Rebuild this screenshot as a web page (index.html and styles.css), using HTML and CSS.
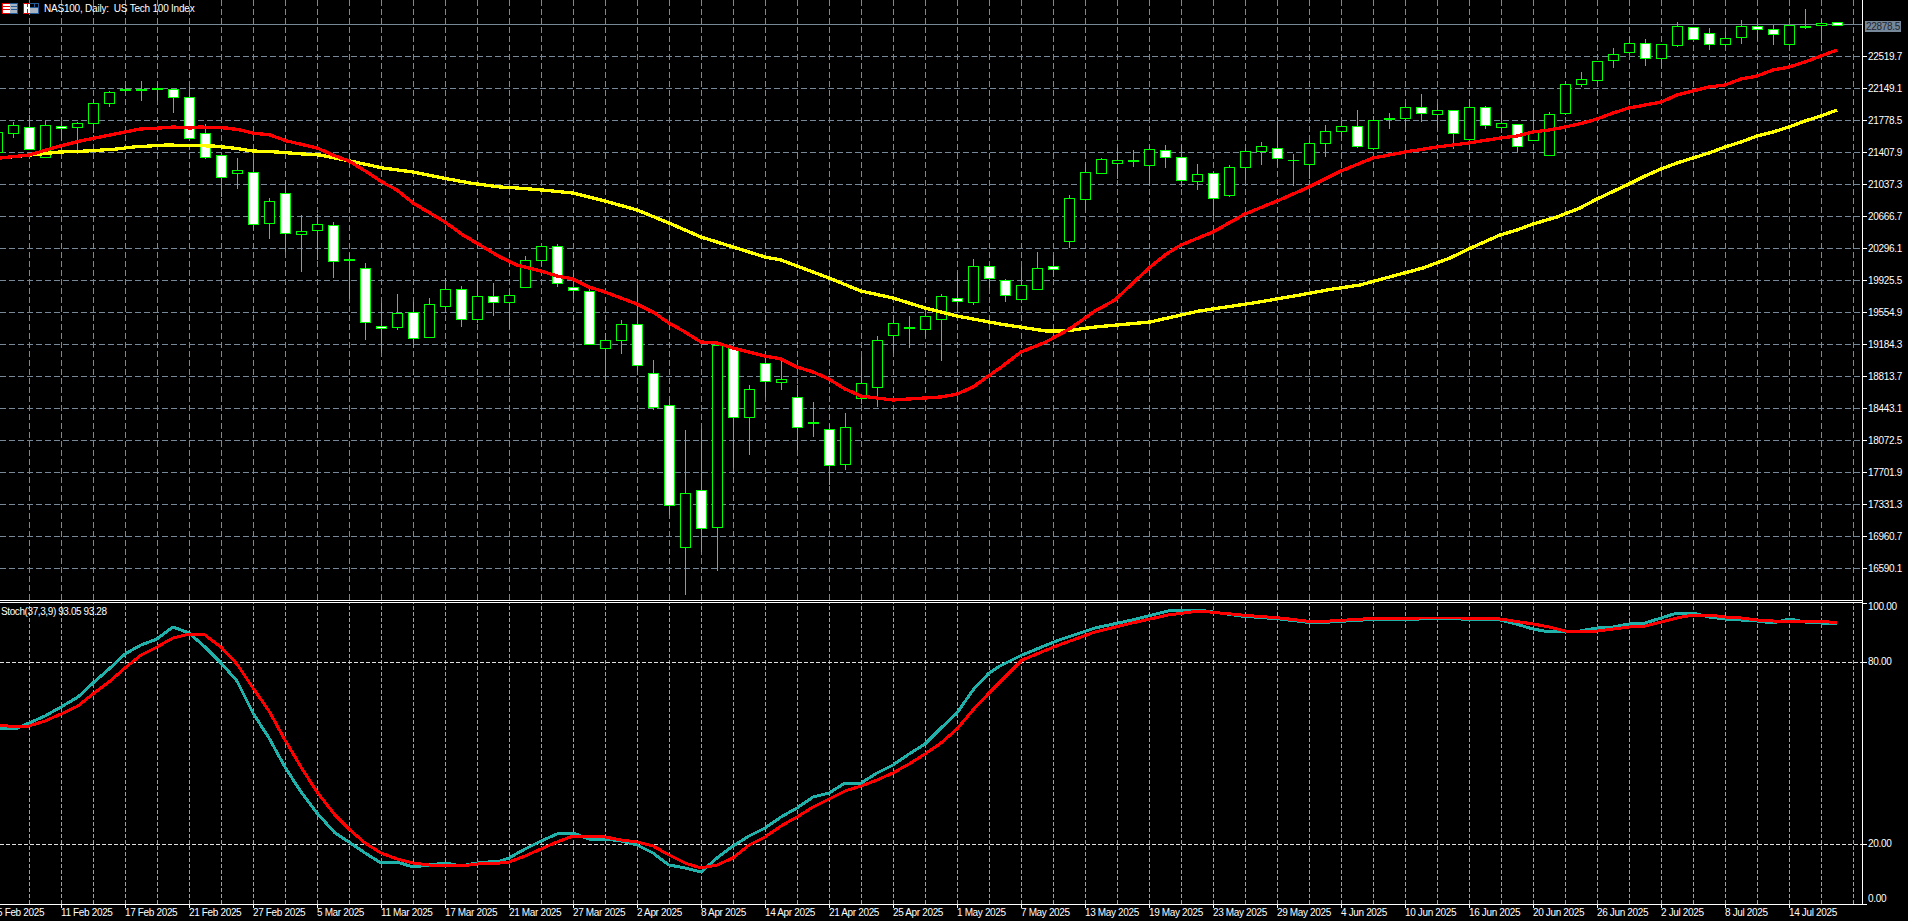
FILE: index.html
```html
<!DOCTYPE html>
<html lang="en">
<head>
<meta charset="utf-8">
<title>NAS100, Daily</title>
<link rel="stylesheet" href="styles.css">
</head>
<body>
<main class="terminal">
  <section class="pane main-pane">
    <svg class="plot" viewBox="0 0 1862 600" width="1862" height="600">
      <defs>
        <path id="vgrid" d="M29.5 0V904M61.5 0V904M93.5 0V904M125.5 0V904M157.5 0V904M189.5 0V904M221.5 0V904M253.5 0V904M285.5 0V904M317.5 0V904M349.5 0V904M381.5 0V904M413.5 0V904M445.5 0V904M477.5 0V904M509.5 0V904M541.5 0V904M573.5 0V904M605.5 0V904M637.5 0V904M669.5 0V904M701.5 0V904M733.5 0V904M765.5 0V904M797.5 0V904M829.5 0V904M861.5 0V904M893.5 0V904M925.5 0V904M957.5 0V904M989.5 0V904M1021.5 0V904M1053.5 0V904M1085.5 0V904M1117.5 0V904M1149.5 0V904M1181.5 0V904M1213.5 0V904M1245.5 0V904M1277.5 0V904M1309.5 0V904M1341.5 0V904M1373.5 0V904M1405.5 0V904M1437.5 0V904M1469.5 0V904M1501.5 0V904M1533.5 0V904M1565.5 0V904M1597.5 0V904M1629.5 0V904M1661.5 0V904M1693.5 0V904M1725.5 0V904M1757.5 0V904M1789.5 0V904M1821.5 0V904M1853.5 0V904"/>
      </defs>
      <path class="price-line" d="M0 24.5H1862"/>
      <use class="grid-main" href="#vgrid"/>
      <path class="grid-main" d="M0 24.5H1862M0 56.5H1862M0 88.5H1862M0 120.5H1862M0 152.5H1862M0 184.5H1862M0 216.5H1862M0 248.5H1862M0 280.5H1862M0 312.5H1862M0 344.5H1862M0 376.5H1862M0 408.5H1862M0 440.5H1862M0 472.5H1862M0 504.5H1862M0 536.5H1862M0 568.5H1862"/>
      <path class="wicks" d="M-2.5 125V157M13.5 122V138M29.5 115V149M45.5 121V157M61.5 122V140M77.5 122V154M93.5 99V133M109.5 91V107M125.5 85V92M141.5 81V101M157.5 83V101M173.5 89V113M189.5 87V138M205.5 124V159M221.5 155V197M237.5 158V189M253.5 159V230M269.5 198V239M285.5 182V252M301.5 215V272M317.5 214V260M333.5 222V278M349.5 253V299M365.5 263V340M381.5 303V353M397.5 294V330M413.5 302V348M429.5 298V337M445.5 278V313M461.5 286V327M477.5 279V323M493.5 283V316M509.5 292V329M525.5 256V287M541.5 246V266M557.5 244V287M573.5 273V299M589.5 289V344M605.5 333V379M621.5 320V354M637.5 285V372M653.5 360V410M669.5 399V515M685.5 430V595M701.5 429V552M717.5 341V571M733.5 345V468M749.5 385V455M765.5 351V397M781.5 359V390M797.5 385V450M813.5 402V437M829.5 424V485M845.5 413V470M861.5 357V404M877.5 336V407M893.5 320V353M909.5 316V348M925.5 309V337M941.5 294V361M957.5 272V306M973.5 259V305M989.5 266V288M1005.5 279V302M1021.5 267V301M1037.5 252V289M1053.5 255V277M1069.5 195V248M1085.5 164V211M1101.5 158V174M1117.5 147V179M1133.5 150V167M1149.5 146V185M1165.5 145V168M1181.5 145V187M1197.5 164V190M1213.5 172V217M1229.5 165V197M1245.5 148V180M1261.5 142V165M1277.5 117V167M1293.5 154V186M1309.5 141V179M1325.5 125V157M1341.5 121V137M1357.5 110V148M1373.5 116V149M1389.5 113V129M1405.5 103V127M1421.5 94V122M1437.5 104V128M1453.5 110V149M1469.5 99V140M1485.5 106V129M1501.5 112V133M1517.5 124V152M1533.5 109V141M1549.5 112V155M1565.5 81V115M1581.5 72V87M1597.5 61V83M1613.5 48V68M1629.5 37V54M1645.5 39V66M1661.5 44V68M1677.5 22V47M1693.5 27V39M1709.5 28V50M1725.5 32V47M1741.5 20V44M1757.5 21V41M1773.5 25V45M1789.5 25V44M1805.5 9V29M1821.5 19V43M1837.5 22V26"/>
      <path class="body-up" d="M-7.5 132.5h10V152.5h-10zM8.5 125.5h10V133.5h-10zM40.5 125.5h10V157.5h-10zM72.5 123.5h10V127.5h-10zM88.5 103.5h10V123.5h-10zM104.5 92.5h10V103.5h-10zM232.5 170.5h10V173.5h-10zM264.5 201.5h10V223.5h-10zM296.5 231.5h10V234.5h-10zM312.5 224.5h10V230.5h-10zM392.5 313.5h10V327.5h-10zM424.5 304.5h10V337.5h-10zM440.5 289.5h10V306.5h-10zM472.5 296.5h10V319.5h-10zM504.5 295.5h10V302.5h-10zM520.5 260.5h10V287.5h-10zM536.5 246.5h10V260.5h-10zM600.5 340.5h10V348.5h-10zM616.5 324.5h10V340.5h-10zM680.5 493.5h10V547.5h-10zM712.5 345.5h10V527.5h-10zM744.5 389.5h10V417.5h-10zM776.5 379.5h10V382.5h-10zM840.5 427.5h10V464.5h-10zM856.5 383.5h10V398.5h-10zM872.5 340.5h10V387.5h-10zM888.5 323.5h10V335.5h-10zM920.5 316.5h10V329.5h-10zM936.5 296.5h10V319.5h-10zM968.5 266.5h10V302.5h-10zM1016.5 285.5h10V299.5h-10zM1032.5 268.5h10V289.5h-10zM1064.5 198.5h10V241.5h-10zM1080.5 172.5h10V199.5h-10zM1096.5 159.5h10V173.5h-10zM1112.5 160.5h10V163.5h-10zM1144.5 149.5h10V165.5h-10zM1192.5 174.5h10V181.5h-10zM1224.5 167.5h10V195.5h-10zM1240.5 151.5h10V167.5h-10zM1256.5 146.5h10V151.5h-10zM1304.5 143.5h10V164.5h-10zM1320.5 131.5h10V143.5h-10zM1336.5 126.5h10V131.5h-10zM1368.5 120.5h10V148.5h-10zM1400.5 107.5h10V118.5h-10zM1432.5 110.5h10V114.5h-10zM1464.5 107.5h10V139.5h-10zM1496.5 123.5h10V127.5h-10zM1528.5 131.5h10V140.5h-10zM1544.5 114.5h10V155.5h-10zM1560.5 84.5h10V113.5h-10zM1576.5 79.5h10V84.5h-10zM1592.5 61.5h10V80.5h-10zM1608.5 54.5h10V60.5h-10zM1624.5 43.5h10V52.5h-10zM1656.5 44.5h10V58.5h-10zM1672.5 26.5h10V45.5h-10zM1720.5 38.5h10V44.5h-10zM1736.5 26.5h10V37.5h-10zM1784.5 25.5h10V44.5h-10zM1816.5 23.5h10V25.5h-10z"/>
      <path class="body-down" d="M24.5 127.5h10V149.5h-10zM56.5 126.5h10V128.5h-10zM168.5 89.5h10V97.5h-10zM184.5 97.5h10V138.5h-10zM200.5 133.5h10V157.5h-10zM216.5 155.5h10V177.5h-10zM248.5 172.5h10V224.5h-10zM280.5 193.5h10V233.5h-10zM328.5 225.5h10V261.5h-10zM360.5 268.5h10V322.5h-10zM376.5 326.5h10V328.5h-10zM408.5 312.5h10V338.5h-10zM456.5 289.5h10V319.5h-10zM488.5 296.5h10V302.5h-10zM552.5 246.5h10V283.5h-10zM568.5 287.5h10V290.5h-10zM584.5 291.5h10V344.5h-10zM632.5 324.5h10V365.5h-10zM648.5 373.5h10V407.5h-10zM664.5 405.5h10V505.5h-10zM696.5 490.5h10V528.5h-10zM728.5 348.5h10V417.5h-10zM760.5 363.5h10V381.5h-10zM792.5 397.5h10V427.5h-10zM824.5 429.5h10V465.5h-10zM952.5 298.5h10V301.5h-10zM984.5 266.5h10V278.5h-10zM1000.5 280.5h10V295.5h-10zM1048.5 266.5h10V269.5h-10zM1160.5 150.5h10V157.5h-10zM1176.5 157.5h10V180.5h-10zM1208.5 173.5h10V198.5h-10zM1272.5 148.5h10V158.5h-10zM1352.5 126.5h10V146.5h-10zM1416.5 107.5h10V113.5h-10zM1448.5 110.5h10V133.5h-10zM1480.5 107.5h10V125.5h-10zM1512.5 124.5h10V146.5h-10zM1640.5 43.5h10V58.5h-10zM1688.5 27.5h10V39.5h-10zM1704.5 33.5h10V44.5h-10zM1752.5 26.5h10V29.5h-10zM1768.5 29.5h10V34.5h-10zM1832.5 22.5h10V25.5h-10z"/>
      <path class="doji" d="M120 89h11v2h-11zM136 89h11v2h-11zM152 88h11v2h-11zM344 259h11v2h-11zM808 422h11v2h-11zM904 327h11v2h-11zM1128 160h11v2h-11zM1288 160h11v1h-11zM1384 118h11v2h-11zM1800 26h11v2h-11z"/>
      <polyline class="ma ma-yellow" points="0,158 20,156 40,154 60,152 87,151 117,149 133,147 167,145 213,146 233,148 253,151 277,152 303,154 320,155 350,161 383,168 413,172 443,178 470,183 500,187 517,188 542,190 573,193 605,201 637,210 669,223 701,237 733,247 765,257 781,260 797,266 829,278 861,291 893,298 925,308 957,316 1000,324 1046,331 1065,331 1095,327 1150,322 1199,311 1253,303 1300,295 1333,289 1360,285 1393,276 1423,268 1450,258 1473,247 1500,235 1517,230 1533,224 1557,217 1580,208 1597,199 1629,184 1645,176 1661,169 1677,163 1693,158 1709,153 1725,147 1741,142 1757,136 1773,132 1789,127 1805,121 1821,116 1837,110"/>
      <polyline class="ma ma-red" points="0,158 29,155 60,146 80,141 100,137 120,133 140,129 160,128 173,127 190,128 200,127 227,128 240,130 253,133 270,135 287,141 300,144 317,148 333,155 349,161 367,172 382,182 397,190 413,203 430,213 445,222 463,235 480,245 500,257 517,265 541,271 557,276 573,279 589,287 605,292 637,304 653,312 669,323 685,332 701,342 717,343 733,348 749,352 765,356 781,359 797,367 813,372 829,379 845,389 861,396 877,398 893,400 909,399 925,398 941,397 957,394 973,387 987,377 1000,368 1021,352 1046,342 1071,328 1095,311 1115,300 1133,283 1149,268 1165,255 1181,245 1213,232 1245,214 1277,201 1309,187 1341,171 1373,158 1405,152 1437,147 1469,143 1500,138 1517,136 1533,132 1549,130 1565,127 1583,123 1597,119 1613,113 1629,108 1645,105 1661,102 1677,95 1693,91 1709,87 1725,85 1741,79 1757,76 1773,70 1789,67 1805,62 1821,56 1837,50"/>
    </svg>
    <header class="chart-title">
      <svg class="title-icon" viewBox="0 0 16 11" width="16" height="11">
        <path class="i-fill-white" d="M1 1h7v9H1z"/><path class="i-fill-grey" d="M8 1h7v9H8z"/>
        <path class="i-red" d="M8 .5H.5V10.5H8M1 3.5H8M1 6.5H8"/><path class="i-blue" d="M8 .5H15.5V10.5H8M9 3.5H15M9 6.5H15"/>
      </svg>
      <svg class="title-icon" viewBox="0 0 16 11" width="16" height="11">
        <path class="i-fill-white" d="M1 1h6v9H1z"/><path class="i-fill-grey" d="M7 5h8v5H7z"/>
        <path class="i-red" d="M7 .5H.5V10.5H7M4.500 1V4M4.500 6V10"/><path class="i-blue" d="M7 .5H15.500V10.500H7M7 4.500H15M11 1V4"/>
      </svg>
      <span>NAS100, Daily:&nbsp; US Tech 100 Index</span>
    </header>
  </section>

  <aside class="price-axis">
    <div class="tick-row">22519.7</div><div class="tick-row">22149.1</div><div class="tick-row">21778.5</div><div class="tick-row">21407.9</div><div class="tick-row">21037.3</div><div class="tick-row">20666.7</div><div class="tick-row">20296.1</div><div class="tick-row">19925.5</div><div class="tick-row">19554.9</div><div class="tick-row">19184.3</div><div class="tick-row">18813.7</div><div class="tick-row">18443.1</div><div class="tick-row">18072.5</div><div class="tick-row">17701.9</div><div class="tick-row">17331.3</div><div class="tick-row">16960.7</div><div class="tick-row">16590.1</div>
    <div class="price-tag">22878.5</div>
  </aside>

  <section class="pane sub-pane">
    <svg class="plot" viewBox="0 603 1862 301" width="1862" height="301">
      <use class="grid-sub-v" href="#vgrid"/>
      <path class="grid-sub-h" d="M0 662.5H1862M0 844.5H1862"/>
      <polyline class="st st-teal" points="0,728 15,729 29,723 45,716 61,707 78,697 93,683 109,669 125,654 141,645 157,639 173,627 189,633 205,647 221,663 237,681 253,713 269,738 285,767 301,792 317,813 335,833 349,842 365,853 381,863 397,862 413,867 429,865 445,863 461,866 477,863 500,861 509,858 525,849 541,841 557,834 573,833 589,839 605,839 621,841 637,845 653,853 669,865 685,868 701,872 717,858 733,846 749,836 765,828 781,817 797,808 813,797 829,793 845,783 861,783 877,773 893,765 909,754 925,744 941,728 957,713 973,690 989,673 1000,666 1022,655 1059,640 1095,628 1132,620 1168,611 1199,610 1241,616 1280,619 1314,623 1363,620 1420,619 1460,619 1500,620 1516,624 1533,629 1549,632 1565,631 1580,631 1597,628 1613,627 1629,624 1645,623 1661,618 1677,613 1693,613 1709,617 1725,619 1741,620 1757,621 1773,623 1789,619 1805,622 1821,623 1837,623"/>
      <polyline class="st st-red" points="0,725 15,727 29,726 45,721 61,714 78,706 93,694 109,682 125,668 141,655 157,647 173,638 189,634 205,635 221,647 237,664 253,688 269,711 285,740 301,767 317,792 335,815 349,829 365,843 381,853 397,859 413,863 429,865 445,865 461,866 477,864 500,863 509,862 525,856 541,849 557,842 573,836 589,836 605,837 621,840 637,842 653,846 669,855 685,863 701,868 717,865 733,858 749,845 765,837 781,826 797,817 813,807 829,799 845,791 861,786 877,780 893,773 909,764 925,754 941,743 957,729 973,710 989,693 1000,682 1022,660 1059,645 1095,632 1132,623 1168,615 1199,611 1241,615 1280,618 1314,622 1363,619 1420,618 1460,618 1500,619 1533,624 1549,627 1565,631 1580,632 1597,631 1629,627 1645,626 1661,622 1677,618 1693,615 1709,615 1725,617 1741,618 1757,620 1773,621 1789,621 1805,621 1821,621 1837,623"/>
    </svg>
    <header class="sub-title">Stoch(37,3,9) 93.05 93.28</header>
  </section>

  <aside class="stoch-axis">
    <div class="level">100.00</div>
    <div class="level level-80">80.00</div>
    <div class="level level-20">20.00</div>
    <div class="level level-0">0.00</div>
  </aside>

  <footer class="time-axis">
    <span class="date">5 Feb 2025</span><span class="date">11 Feb 2025</span><span class="date">17 Feb 2025</span><span class="date">21 Feb 2025</span><span class="date">27 Feb 2025</span><span class="date">5 Mar 2025</span><span class="date">11 Mar 2025</span><span class="date">17 Mar 2025</span><span class="date">21 Mar 2025</span><span class="date">27 Mar 2025</span><span class="date">2 Apr 2025</span><span class="date">8 Apr 2025</span><span class="date">14 Apr 2025</span><span class="date">21 Apr 2025</span><span class="date">25 Apr 2025</span><span class="date">1 May 2025</span><span class="date">7 May 2025</span><span class="date">13 May 2025</span><span class="date">19 May 2025</span><span class="date">23 May 2025</span><span class="date">29 May 2025</span><span class="date">4 Jun 2025</span><span class="date">10 Jun 2025</span><span class="date">16 Jun 2025</span><span class="date">20 Jun 2025</span><span class="date">26 Jun 2025</span><span class="date">2 Jul 2025</span><span class="date">8 Jul 2025</span><span class="date">14 Jul 2025</span>
  </footer>
</main>
</body>
</html>
```
FILE: styles.css
```css
* { box-sizing: border-box; }

html, body {
  margin: 0;
  width: 1908px;
  height: 921px;
  overflow: hidden;
  background: #000;
}

.terminal {
  display: grid;
  grid-template-columns: 1862px 46px;
  grid-template-rows: 601px 304px 16px;
  width: 1908px;
  height: 921px;
  background: #000;
  color: #fff;
  font: 10px/10px "Liberation Sans", Arial, sans-serif;
}

.pane { position: relative; overflow: hidden; }
.plot { display: block; shape-rendering: crispEdges; }

.main-pane { border-bottom: 1px solid #fff; }

.sub-pane {
  margin-top: 1px;
  border-top: 1px solid #fff;
  border-bottom: 1px solid #fff;
}

/* grid and lines */
.price-line { fill: none; stroke: #778899; stroke-width: 1; }
.grid-main { fill: none; stroke: #778899; stroke-width: 1; stroke-dasharray: 6 3; }
.grid-sub-v { fill: none; stroke: #a0a0a0; stroke-width: 1; stroke-dasharray: 4 2; }
.grid-sub-h { fill: none; stroke: #e0e0e0; stroke-width: 1; stroke-dasharray: 4 2; }

.wicks { fill: none; stroke: #00ff00; stroke-width: 1; }
.body-up { fill: #000; stroke: #00ff00; stroke-width: 1; }
.body-down { fill: #fff; stroke: #00ff00; stroke-width: 1; }
.doji { fill: #00ff00; }

.ma { fill: none; stroke-width: 3.3; stroke-linejoin: round; }
.ma-yellow { stroke: #ffff00; }
.ma-red { stroke: #ff0000; }

.st { fill: none; stroke-width: 3; stroke-linejoin: round; }
.st-teal { stroke: #20b2aa; }
.st-red { stroke: #ff0000; }

/* titles over the charts */
.chart-title {
  position: absolute;
  top: 3px;
  left: 2px;
  display: flex;
  align-items: center;
  gap: 5px;
  height: 11px;
  letter-spacing: -0.22px;
}

.title-icon { display: block; shape-rendering: crispEdges; }
.i-fill-white { fill: #fff; }
.i-fill-grey { fill: #a9b4c2; }
.i-red { fill: none; stroke: #e60000; stroke-width: 1; }
.i-blue { fill: none; stroke: #1f5c99; stroke-width: 1; }

.sub-title {
  position: absolute;
  top: 4px;
  left: 1px;
  white-space: nowrap;
  letter-spacing: -0.4px;
}

/* price axis */
.price-axis {
  position: relative;
  height: 600px;
  padding-top: 41px;
  border-left: 1px solid #fff;
  letter-spacing: -0.3px;
}

.tick-row {
  display: flex;
  align-items: center;
  gap: 1px;
  height: 32px;
}

.tick-row::before {
  content: "";
  width: 4px;
  height: 1px;
  margin-bottom: 2px;
  background: #fff;
}

.price-tag {
  position: absolute;
  top: 21px;
  left: 2px;
  width: 36px;
  height: 11px;
  padding-left: 1px;
  background: #778899;
  color: #1c2630;
  line-height: 11px;
}

/* stochastic axis */
.stoch-axis {
  position: relative;
  height: 305px;
  margin-top: -1px;
  padding-top: 2px;
  padding-left: 5px;
  border-left: 1px solid #fff;
  letter-spacing: -0.3px;
}

.stoch-axis::before,
.stoch-axis::after {
  content: "";
  position: absolute;
  left: 0;
  width: 4px;
  height: 1px;
  background: #fff;
}

.stoch-axis::before { top: 3px; }
.stoch-axis::after { top: 304px; }

.level { position: relative; height: 10px; }
.level-80 { margin-top: 45px; }
.level-20 { margin-top: 172px; }
.level-0 { margin-top: 45px; }

.level-80::before,
.level-20::before {
  content: "";
  position: absolute;
  left: -5px;
  top: 5px;
  width: 4px;
  height: 1px;
  background: #fff;
}

/* time axis */
.time-axis {
  grid-column: 1 / -1;
  display: flex;
  width: 1862px;
  margin-top: -1px;
  overflow: hidden;
  letter-spacing: -0.35px;
}

.date {
  position: relative;
  flex: 0 0 64px;
  padding-top: 4px;
  white-space: nowrap;
}

.date:first-child { margin-left: -3px; }

.date::before {
  content: "";
  position: absolute;
  left: 0;
  top: 0;
  width: 1px;
  height: 4px;
  background: #fff;
}
```
